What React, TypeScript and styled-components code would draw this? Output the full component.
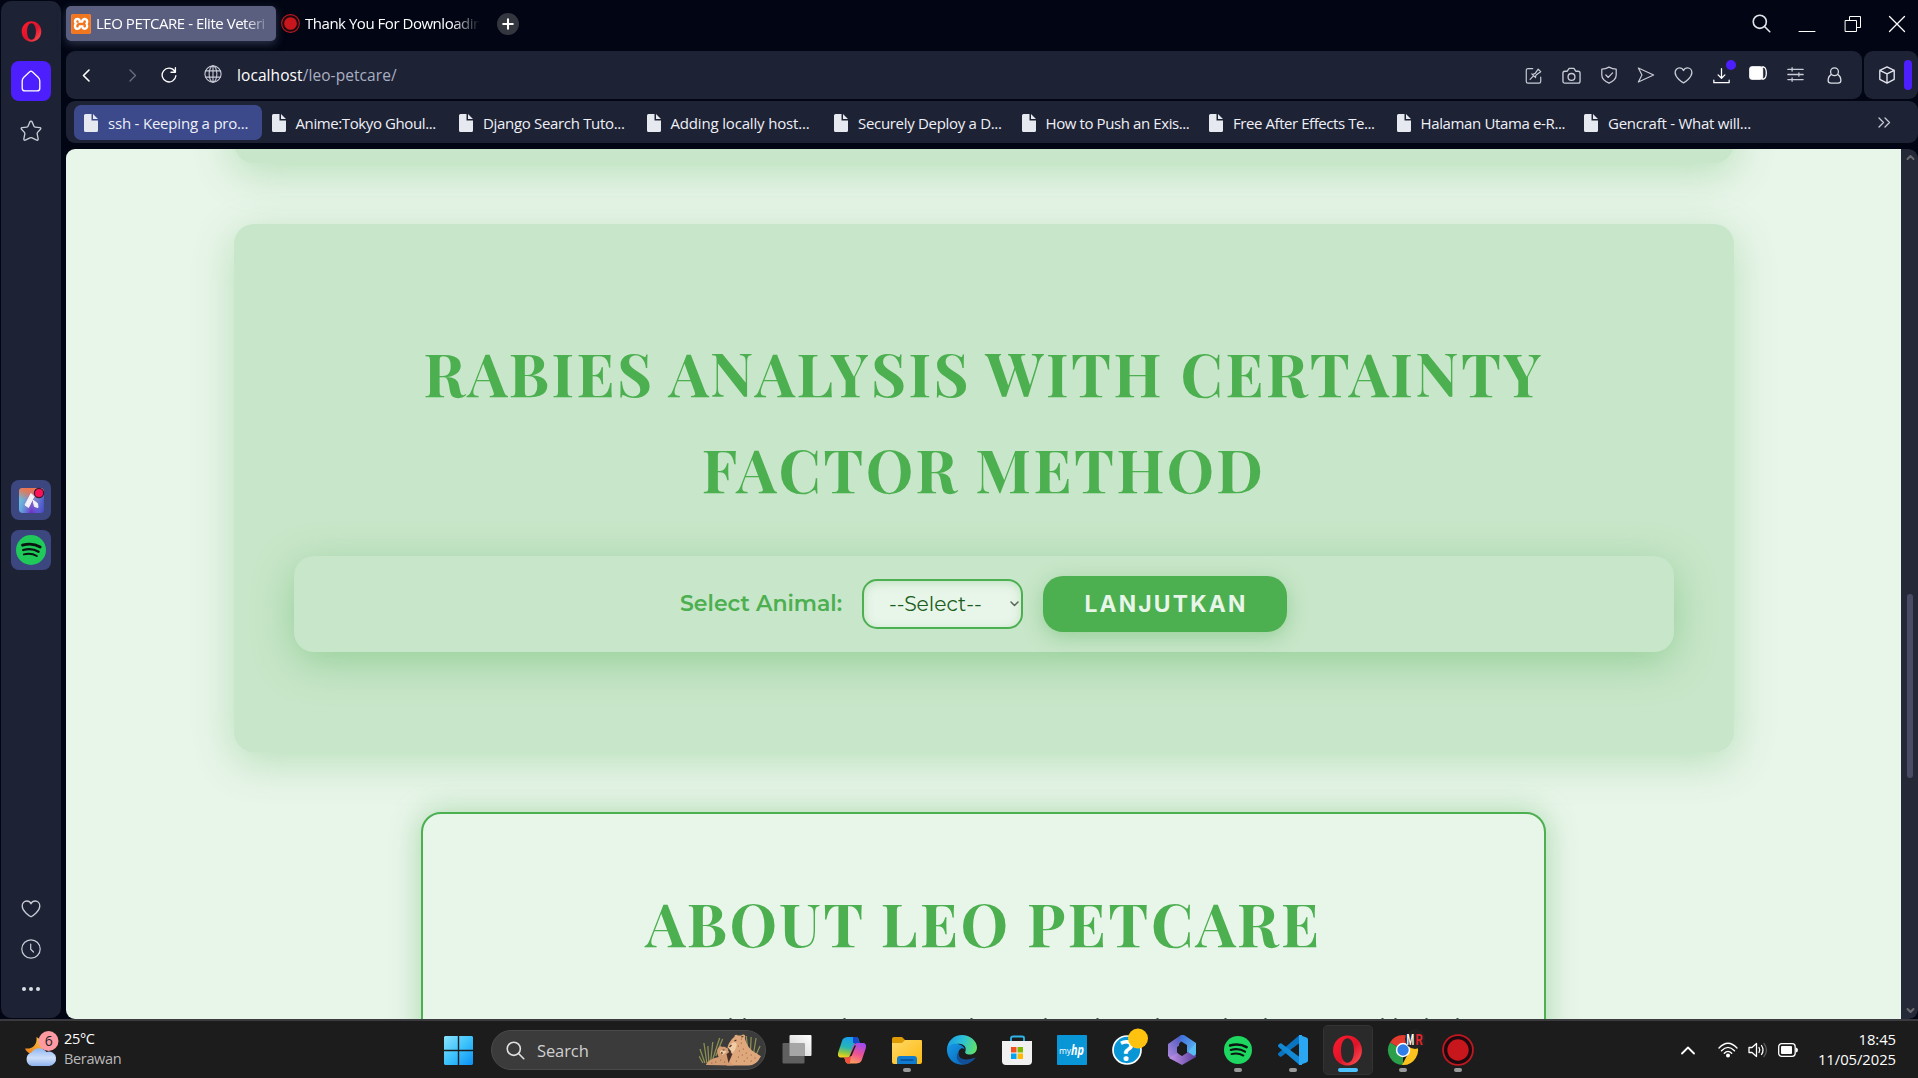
import React from 'react';
import styled, { createGlobalStyle } from 'styled-components';
import { SiXampp } from 'react-icons/si';

const UI = '"Open Sans", "Noto Sans", sans-serif';

const Global = createGlobalStyle`
  * { box-sizing: border-box; }
  body { margin: 0; background: #020614; overflow: hidden; }
  svg { display: block; flex: none; }
`;

const Desktop = styled.div`
  width: 1918px;
  height: 1078px;
  display: flex;
  flex-direction: column;
  overflow: hidden;
  background: #020614;
  font-family: ${UI};
`;
const BrowserWindow = styled.div`
  display: flex;
  height: 1019px;
  gap: 5px;
  padding-left: 1px;
`;

/* ---------- sidebar ---------- */
const Sidebar = styled.aside`
  width: 60px;
  height: 1017px;
  margin-top: 1px;
  border-radius: 10px;
  background: #1e2235;
  display: flex;
  flex-direction: column;
  align-items: center;
`;
const SideSlot = styled.div<{ $h: number; $mt?: number }>`
  height: ${(p) => p.$h}px;
  margin-top: ${(p) => p.$mt ?? 0}px;
  display: flex;
  align-items: center;
  justify-content: center;
`;
const SideTile = styled.div<{ $bg: string; $mt?: number }>`
  width: 40px;
  height: 40px;
  flex: none;
  margin-top: ${(p) => p.$mt ?? 0}px;
  border-radius: 8px;
  background: ${(p) => p.$bg};
  display: flex;
  align-items: center;
  justify-content: center;
`;

/* ---------- chrome ---------- */
const Column = styled.div`
  flex: 1;
  min-width: 0;
  display: flex;
  flex-direction: column;
`;
const TabStrip = styled.div`
  height: 51px;
  display: flex;
  padding-top: 6px;
  position: relative;
`;
const Tab = styled.div<{ $active?: boolean; $w: number }>`
  width: ${(p) => p.$w}px;
  height: 35px;
  border-radius: 5px;
  background: ${(p) => (p.$active ? '#5a5f80' : 'transparent')};
  box-shadow: ${(p) => (p.$active ? '0 3px 8px rgba(90, 95, 128, .5)' : 'none')};
  display: flex;
  align-items: center;
  gap: 5px;
  padding-left: 5px;
`;
const TabLabel = styled.span<{ $w: number; $ls?: number }>`
  width: ${(p) => p.$w}px;
  white-space: nowrap;
  color: #fff;
  font-size: 15px;
  line-height: 22px;
  padding-bottom: 2px;
  letter-spacing: ${(p) => p.$ls ?? 0}px;
  mask-image: linear-gradient(90deg, #000 calc(100% - 28px), transparent);
`;
const XamppBadge = styled.div`
  width: 20px;
  height: 20px;
  border-radius: 3px;
  background: #fff;
  color: #f0761f;
  font-size: 20px;
`;
const NewTab = styled.div`
  width: 22px;
  height: 22px;
  margin: 7px 0 0 19px;
  border-radius: 50%;
  background: #34363f;
  display: flex;
  align-items: center;
  justify-content: center;
`;
const WindowButtons = styled.div`
  margin-left: auto;
  height: 35px;
  display: flex;
  align-items: center;
`;
const Cell = styled.div<{ $w: number; $shift?: number; $ml?: number }>`
  width: ${(p) => p.$w}px;
  margin-left: ${(p) => p.$ml ?? 0}px;
  flex: none;
  display: flex;
  justify-content: center;
  position: relative;
  padding-bottom: ${(p) => p.$shift ?? 0}px;
`;
const DownloadDot = styled.i`
  position: absolute;
  top: -7px;
  left: 23px;
  width: 10px;
  height: 10px;
  border-radius: 50%;
  background: #4d1fff;
`;
const BarRow = styled.div`
  display: flex;
  gap: 2px;
  height: 48px;
`;
const AddressBar = styled.div`
  width: 1796px;
  border-radius: 9px;
  background: #1e2235;
  display: flex;
  align-items: center;
  padding-right: 9px;
`;
const Url = styled.div`
  flex: 1;
  margin-left: 14px;
  color: #a9afc2;
  font-size: 15.5px;
  letter-spacing: .08px;
  b { font-weight: 400; color: #fff; }
`;
const SidePanelBar = styled.div`
  flex: 1;
  border-radius: 9px;
  background: #1e2235;
  display: flex;
  align-items: center;
  padding-left: 14px;
  gap: 8px;
`;
const Accent = styled.div`
  width: 8px;
  height: 30px;
  border-radius: 4px;
  background: #4d1fff;
`;
const Bookmarks = styled.div`
  height: 42px;
  margin-top: 2px;
  border-radius: 9px;
  background: #1e2235;
  display: flex;
  align-items: center;
  padding-left: 8px;
  padding-top: 1px;
`;
const Bookmark = styled.div<{ $active?: boolean }>`
  width: 187.5px;
  height: 35px;
  border-radius: 7px;
  background: ${(p) => (p.$active ? '#3c4a8c' : 'transparent')};
  display: flex;
  align-items: center;
  gap: 10px;
  padding-left: 10px;
`;
const BookmarkText = styled.span<{ $ls: number }>`
  color: #eef0f6;
  font-size: 15px;
  white-space: nowrap;
  letter-spacing: ${(p) => p.$ls}px;
`;
const More = styled.div`
  margin-left: auto;
  padding-right: 27px;
`;

/* ---------- page ---------- */
const Viewport = styled.div`
  margin-top: 6px;
  height: 870px;
  display: flex;
  border-radius: 9px;
  overflow: hidden;
`;
const Page = styled.main`
  width: 1835px;
  height: 870px;
  overflow: hidden;
  background: #e8f5e9;
  display: flex;
  flex-direction: column;
  align-items: center;
`;
const Section = styled.section<{ $h: number; $mt?: number }>`
  width: 1500px;
  height: ${(p) => p.$h}px;
  flex: none;
  margin-top: ${(p) => p.$mt ?? 0}px;
  padding: 100px 60px 0;
  border-radius: 20px;
  background: #c8e6c9;
  box-shadow: 0 10px 40px rgba(76, 175, 80, .3);
`;
const Heading = styled.h2`
  margin: 0;
  color: #4caf50;
  text-align: center;
  font-family: "Playfair Display", "Liberation Serif", serif;
  font-weight: 700;
  font-size: 60px;
  line-height: 96px;
  letter-spacing: 2.5px;
`;
const Line = styled.span`
  display: block;
  white-space: nowrap;
`;
const AnimalForm = styled.div`
  height: 96px;
  margin-top: 40px;
  border-radius: 20px;
  background: #c8e6c9;
  box-shadow: 0 10px 40px rgba(76, 175, 80, .4);
  display: flex;
  align-items: center;
  justify-content: center;
  gap: 20px;
  font-family: Montserrat, Inter, sans-serif;
`;
const Label = styled.label`
  width: 162px;
  padding-bottom: 2px;
  white-space: nowrap;
  color: #4caf50;
  font-weight: 600;
  font-size: 22px;
`;
const Select = styled.div`
  width: 161px;
  height: 50px;
  border: 2px solid #4caf50;
  border-radius: 15px;
  background: #e8f5e9;
  box-shadow: inset 0 2px 10px rgba(76, 175, 80, .25);
  display: flex;
  align-items: center;
  justify-content: space-between;
  padding: 0 2px 1px 25px;
  color: #1b5e20;
  font-size: 20.3px;
  font-weight: 400;
  span { white-space: nowrap; }
`;
const Submit = styled.button`
  width: 244px;
  height: 56px;
  border: 0;
  border-radius: 20px;
  background: #4caf50;
  box-shadow: 0 5px 20px rgba(76, 175, 80, .4);
  color: #e8f5e9;
  font-family: Inter, sans-serif;
  font-weight: 700;
  font-size: 22.8px;
  letter-spacing: 2.2px;
  padding: 0 0 1px 2px;
`;
const About = styled.section`
  width: 1125px;
  height: 300px;
  flex: none;
  margin-top: 60px;
  padding-top: 60px;
  border: 2px solid #4caf50;
  border-radius: 20px;
  background: #e8f5e9;
  box-shadow: 0 0 30px rgba(76, 175, 80, .4);
`;
const ParagraphTop = styled.svg`
  margin: 48px 0 0 0;
`;
const ScrollTrack = styled.div`
  width: 17px;
  height: 870px;
  background: #252937;
  border-radius: 0 9px 9px 0;
  display: flex;
  flex-direction: column;
  align-items: center;
  padding: 5px 0 5px 1px;
`;
const Thumb = styled.div`
  width: 6px;
  height: 184px;
  margin: 433px 0 auto;
  border-radius: 3px;
  background: #4a4c66;
`;

/* ---------- taskbar ---------- */
const Taskbar = styled.footer`
  height: 59px;
  background: #1c1c1c;
  border-top: 2px solid #3b3b3f;
  padding-top: 1px;
  display: flex;
  align-items: center;
`;
const Weather = styled.div`
  width: 444px;
  padding-left: 24px;
  display: flex;
  align-items: center;
  gap: 4px;
  font-size: 14.5px;
  line-height: 20px;
  letter-spacing: -.35px;
  color: #fff;
  div { padding-bottom: 2px; }
  em { display: block; font-style: normal; color: #b9b9b9; }
`;
const SearchBox = styled.div`
  width: 275px;
  height: 40px;
  margin: 0 3px 0 18px;
  border: 1px solid #4a4a4a;
  border-radius: 20px;
  background: #3b3b3b;
  display: flex;
  align-items: center;
  padding: 0 4px 0 14px;
  gap: 12px;
  color: #d0d0d0;
  font-size: 16.5px;
  letter-spacing: -.1px;
  span { flex: 1; }
`;
const AppCell = styled.div<{ $focus?: boolean }>`
  width: 50px;
  height: 50px;
  margin: 0 2.57px;
  flex: none;
  border-radius: 5px;
  border: 1px solid ${(p) => (p.$focus ? '#333' : 'transparent')};
  background: ${(p) => (p.$focus ? '#2a2a2a' : 'transparent')};
  display: flex;
  flex-direction: column;
  align-items: center;
  padding-top: 8px;
  gap: 2px;
`;
const Running = styled.i<{ $focus?: boolean }>`
  width: ${(p) => (p.$focus ? 20 : 8)}px;
  height: 4px;
  border-radius: 2px;
  background: ${(p) => (p.$focus ? '#4cc2ff' : '#9a9a9a')};
`;
const Tray = styled.div`
  margin-left: auto;
  display: flex;
  align-items: center;
  padding-right: 22px;
`;
const Clock = styled.div`
  width: 88px;
  padding-bottom: 2px;
  text-align: right;
  color: #fff;
  font-size: 14.8px;
  line-height: 20px;
  letter-spacing: -.05px;
`;

/* ---------- icons ---------- */
type IconProps = { s?: number; w?: number; h?: number; vb?: string; c?: string; sw?: number; children: React.ReactNode };
const Stroke = ({ s = 20, w, h, vb = '0 0 20 20', c = '#c9ccd6', sw = 1.4, children }: IconProps) => (
  <svg width={w ?? s} height={h ?? s} viewBox={vb} fill="none" stroke={c} strokeWidth={sw} strokeLinecap="round" strokeLinejoin="round">
    {children}
  </svg>
);

const HEART = 'M10 17.8C8.2 16.8 1.2 12.2 1.2 6.9 1.2 4 3.3 2 5.7 2 7.7 2 9.3 3.100 10 4.800 10.700 3.100 12.300 2 14.300 2 16.700 2 18.800 4 18.800 6.900 18.800 12.200 11.800 16.800 10 17.800Z';

const OperaMark = ({ s, id }: { s: number; id: string }) => (
  <svg width={s} height={s} viewBox="0 0 30 30">
    <defs>
      <linearGradient id={id} x1="0" y1="0" x2="1" y2="1">
        <stop offset="0" stopColor="#ff1b2d" />
        <stop offset=".55" stopColor="#e0132a" />
        <stop offset="1" stopColor="#ff5a5a" />
      </linearGradient>
    </defs>
    <path fillRule="evenodd" fill={`url(#${id})`} d="M15 .5C7 .5 1 7 1 15s6 14.500 14 14.500S29 23 29 15 23 .5 15 .5Zm0 2.700c3.900 0 6.300 5 6.300 11.800S18.900 26.800 15 26.800 8.700 21.800 8.700 15 11.100 3.200 15 3.200Z" />
  </svg>
);

const SpotifyMark = ({ s, bg }: { s: number; bg: string }) => (
  <svg width={s} height={s} viewBox="0 0 30 30">
    <circle cx="15" cy="15" r="15" fill={bg} />
    <g fill="none" stroke="#0b1410" strokeLinecap="round">
      <path d="M6.500 10.200C12 8.600 19 9 24.200 12" strokeWidth="2.800" />
      <path d="M7.200 15C12.500 13.500 18 14 22.600 16.700" strokeWidth="2.300" />
      <path d="M7.900 19.400C12.300 18.200 17 18.700 20.800 21" strokeWidth="2" />
    </g>
  </svg>
);

const RecordMark = ({ s }: { s: number }) => (
  <svg width={s} height={s} viewBox="0 0 30 30">
    <circle cx="15" cy="15" r="14" fill="#1c0a10" stroke="#c0181f" strokeWidth="1.700" />
    <circle cx="15" cy="15" r="10" fill="#c8161d" />
  </svg>
);

const Doc = () => (
  <svg width="14" height="18" viewBox="0 0 14 18" fill="#e6eaf0">
    <path d="M1.500 0H7.500V6.500H14V16.500A1.500 1.500 0 0 1 12.500 18H1.500A1.500 1.500 0 0 1 0 16.500V1.500A1.500 1.500 0 0 1 1.500 0ZM9 0L14 5H9Z" />
  </svg>
);

const AriaApp = () => (
  <svg width="25" height="25" viewBox="0 0 25 25" style={{ overflow: 'visible' }}>
    <defs>
      <linearGradient id="ar1" x1=".3" y1="0" x2=".6" y2="1">
        <stop offset="0" stopColor="#ee7350" /><stop offset=".45" stopColor="#8a7cc0" /><stop offset="1" stopColor="#6a28cc" />
      </linearGradient>
      <linearGradient id="ar2"><stop offset="0" stopColor="#57d0e8" stopOpacity=".8" /><stop offset=".5" stopColor="#57d0e8" stopOpacity="0" /><stop offset="1" stopColor="#3b58c8" stopOpacity=".8" /></linearGradient>
      <linearGradient id="ar3" x1="0" y1="0" x2="0" y2="1"><stop offset="0" stopColor="#ee7350" /><stop offset="1" stopColor="#ee7350" stopOpacity="0" /></linearGradient>
    </defs>
    <rect width="25" height="25" rx="4" fill="url(#ar1)" />
    <rect width="25" height="25" rx="4" fill="url(#ar2)" />
    <rect width="25" height="11" rx="4" fill="url(#ar3)" />
    <path d="M12 5.500 15 8.500 9.500 19.500 6 17ZM14 12 18.500 15.500 19 19.500 15.500 18.500Z" fill="#f4f0fa" stroke="#f4f0fa" strokeLinejoin="round" />
    <circle cx="20" cy="5" r="4.600" fill="#ff1057" stroke="#3a1830" strokeWidth="1.200" />
  </svg>
);

const WeatherIcon = () => (
  <svg width="36" height="38" viewBox="0 0 36 38">
    <defs>
      <linearGradient id="wm" x1="1" y1="0" x2="0" y2="1"><stop offset="0" stopColor="#f6c944" /><stop offset="1" stopColor="#f07a1c" /></linearGradient>
      <linearGradient id="wc" x1="0" y1="0" x2="0" y2="1"><stop offset="0" stopColor="#8fb6f2" /><stop offset=".55" stopColor="#cfe0fa" /><stop offset="1" stopColor="#8db2ee" /></linearGradient>
    </defs>
    <path d="M12.500 6C13.500 13 9 18.500 1 17.500 4 24 13 26 18 21L20 11Z" fill="url(#wm)" />
    <path d="M8 35A7 7 0 0 1 7.500 21.500 9 9 0 0 1 22.500 21 7.200 7.200 0 1 1 25 35Z" fill="url(#wc)" />
    <circle cx="24.500" cy="10" r="10" fill="#ff9aa2" />
    <text x="24.500" y="15" fontSize="14" textAnchor="middle" fill="#222" fontFamily="Open Sans">6</text>
  </svg>
);

const StartIcon = () => (
  <svg width="29" height="29" viewBox="0 0 29 29">
    <defs><linearGradient id="win" x1="0" y1="0" x2="1" y2="1"><stop offset="0" stopColor="#8be3ff" /><stop offset=".5" stopColor="#3dc3fb" /><stop offset="1" stopColor="#0a90f5" /></linearGradient></defs>
    <path fill="url(#win)" d="M1 0H13.800V13.800H0V1ZM15.200 0H28L29 1V13.800H15.200ZM0 15.200H13.800V29H1L0 28ZM15.200 15.200H29V28L28 29H15.200Z" />
  </svg>
);

const Cheetahs = () => (
  <svg width="62" height="32" viewBox="0 0 63 32" preserveAspectRatio="none">
    <g stroke="#8b9052" strokeWidth="1.300" fill="none">
      <path d="M6 29 1 15M8 29 5 9M10 28 9 12M12 26 14 8M14 25 21 4M17 22 24 5M4 29 0 22M50 20 48 2M52 22 53 3M55 22 58 4M57 23 62 12" />
    </g>
    <path d="M29 30C30 21 34 17 35 12 32 12 31 15 29 14 29 10 34 4 36 3 36 .5 38 0 39.500 1.500H43C45-.5 48 1 46.500 4 48 9 50 14 56 18 60 20 62 22 63 22 60 28 57 31 50 31.500H28Z" fill="#dfa77c" />
    <path d="M7 31C9 26 15 24 20 23 18 19 18 15 20 13.500 21 12 23 12 23.500 13 25 12.500 27 13 28 14 30 14 30 16 29.500 16.500 31 18 31 19 29 20 29 25 32 29 35 31.500Z" fill="#d49c72" />
    <path d="M30 14C32 9 35 7 38 9 39 13 36 17 34 19ZM21 18C23 15 26 15 28 18L24 21Z" fill="#f0cba4" />
    <path d="M28 20 31 18 34 20 30 29Z" fill="#493027" />
    <path d="M31 13 33 11M36 7 38 6M24 16H26M43 3 45 2.500M23 18 23.500 20" stroke="#4a2e20" strokeWidth="1.200" />
    <g fill="#875032">
      {[[40, 12], [43, 9], [41, 17], [45, 15], [48, 19], [44, 21], [40, 23], [49, 24], [53, 21], [46, 27], [53, 27], [57, 24], [38, 27], [17, 28], [22, 26], [13, 29], [26, 28], [43, 5]].map(([x, y]) => (
        <circle key={`${x}-${y}`} cx={x} cy={y} r=".6" />
      ))}
    </g>
  </svg>
);

const Glass = ({ s, c = '#e2e4ea' }: { s: number; c?: string }) => (
  <Stroke s={s} c={c} sw={1.7}><circle cx="8.200" cy="8.200" r="6.900" /><path d="M13.200 13.200 18.700 18.700" /></Stroke>
);

const PadBox = styled.div`
  width: 32px;
  height: 32px;
  display: flex;
  align-items: center;
  justify-content: center;
`;
function Pad({ children }: { children: React.ReactNode }) {
  return <PadBox>{children}</PadBox>;
}

const APPS: { icon: React.ReactNode; running?: boolean; focus?: boolean }[] = [
  {
    icon: (
      <svg width="32" height="32" viewBox="0 0 32 32">
        <defs><linearGradient id="tv" x1="0" y1="1" x2="1" y2="0"><stop offset="0" stopColor="#cfcfcf" /><stop offset="1" stopColor="#fff" /></linearGradient></defs>
        <rect x="8.500" y="1" width="22" height="21" rx="1" fill="url(#tv)" />
        <rect x="1.500" y="9" width="22" height="20.500" rx="1" fill="#606060" />
        <path d="M8.500 9H23.500V22H8.500Z" fill="#a6a6a6" />
      </svg>
    ),
  },
  {
    icon: (
      <svg width="32" height="32" viewBox="0 0 32 32">
        <defs>
          <linearGradient id="cp1" x1=".5" y1="0" x2=".3" y2="1"><stop offset="0" stopColor="#189df0" /><stop offset=".5" stopColor="#27b5b5" /><stop offset=".8" stopColor="#9ac83a" /><stop offset="1" stopColor="#f6d220" /></linearGradient>
          <linearGradient id="cp2" x1=".7" y1="0" x2=".3" y2="1"><stop offset="0" stopColor="#a04af0" /><stop offset=".5" stopColor="#ef5390" /><stop offset="1" stopColor="#ffa55a" /></linearGradient>
        </defs>
        <path d="M13 3H20C23 3 22.500 7 24 9H19L15 20C14 23 12 23.500 9 23.500H5C2 23.500 1.500 21 2.300 18L6 7C7 4 9 3 13 3Z" fill="url(#cp1)" />
        <path d="M17 3H20C23 3 22 8 24.500 9H17Z" fill="#1747cf" />
        <path d="M19 29.500H12C9 29.500 9.500 25 8 23.500H13L17 12C18 9.500 20 9 23 9H27C30 9 30.500 11.500 29.700 14.500L26 25.500C25 28.500 23 29.500 19 29.500Z" fill="url(#cp2)" />
        <path d="M8 23.500H13L15 21 14 29.500H12C9 29.500 9.500 25 8 23.500Z" fill="#f0503c" />
        <path d="M18.500 11.500H20L15.500 22 13.500 22.500Z" fill="#1c1c1c" />
      </svg>
    ),
  },
  {
    running: true,
    icon: (
      <svg width="32" height="32" viewBox="0 0 32 32">
        <defs><linearGradient id="fx" x1="0" y1="0" x2="1" y2="1"><stop offset="0" stopColor="#ffd968" /><stop offset="1" stopColor="#fdb90f" /></linearGradient></defs>
        <path d="M1 5Q1 3 3 3H11L14 6V12H1Z" fill="#dd9a05" />
        <path d="M1 9H11L14 6H30Q31 6 31 7V28Q31 30 29 30H3Q1 30 1 28Z" fill="url(#fx)" />
        <path d="M6 30V25Q6 22 9 22H23Q26 22 26 25V30Z" fill="#0f7cd0" />
        <path d="M9.500 26H22.500" stroke="#0a4f94" strokeWidth="1.500" />
      </svg>
    ),
  },
  {
    icon: (
      <svg width="32" height="32" viewBox="0 0 32 32">
        <defs>
          <linearGradient id="ed1" x1="0" y1=".3" x2="1" y2=".5"><stop offset="0" stopColor="#1b9de2" /><stop offset=".5" stopColor="#2cc0d8" /><stop offset="1" stopColor="#5fe06a" /></linearGradient>
          <linearGradient id="ed2" x1="0" y1="0" x2="1" y2="1"><stop offset="0" stopColor="#159be8" /><stop offset="1" stopColor="#0a5fb4" /></linearGradient>
        </defs>
        <path d="M1 16C1 7 8 1 16 1S31 7 31 13.500C31 18 27.500 20.500 24 20.500 20 20.500 18.500 19 19.500 17 21 12 16 9 11 10 5 11 2 15 1 18Z" fill="url(#ed1)" />
        <path d="M1 15C3 10 8 9 12 10 16 11 19 14 18.500 15.500 16 12 11.500 16 12.500 21 14 27 20 29 23 29 12 34 .5 27 1 15Z" fill="url(#ed2)" />
        <path d="M12.500 18C11.500 24 17 28 29.500 23.500 27 28 21 31 17 30 11 29 9 22 12.500 18Z" fill="#124f95" />
      </svg>
    ),
  },
  {
    icon: (
      <svg width="32" height="32" viewBox="0 0 32 32">
        <path d="M10 8V4Q10 2.500 12 2.500H21Q23 2.500 23 4V8" fill="none" stroke="#2fb4ea" strokeWidth="1.800" />
        <path d="M1 7H31V27Q31 31 27 31H5Q1 31 1 27Z" fill="#f1f1f1" />
        <path d="M10 13H15.500V18.500H10Z" fill="#f25022" /><path d="M16.500 13H22V18.500H16.500Z" fill="#7fba00" />
        <path d="M10 19.500H15.500V25H10Z" fill="#00a4ef" /><path d="M16.500 19.500H22V25H16.500Z" fill="#ffb900" />
      </svg>
    ),
  },
  {
    icon: (
      <svg width="32" height="32" viewBox="0 0 32 32">
        <rect x="1" y="1" width="30" height="30" rx="1" fill="#0896d7" />
        <text x="3" y="20" fontSize="8.500" fill="#fff" fontFamily="Open Sans">my</text>
        <text x="15" y="21" fontSize="15" fill="#fff" fontWeight="700" fontStyle="italic" fontFamily="Open Sans" textLength="13" lengthAdjust="spacingAndGlyphs">hp</text>
      </svg>
    ),
  },
  {
    icon: (
      <svg width="32" height="32" viewBox="0 0 32 32" style={{ overflow: 'visible' }}>
        <circle cx="16" cy="16" r="14" fill="#0896d7" stroke="#fff" strokeWidth="1.700" />
        <text x="16" y="26.500" fontSize="29" fill="#fff" fontWeight="700" textAnchor="middle" fontFamily="Open Sans">?</text>
        <circle cx="27" cy="4.500" r="10" fill="#ffc20e" />
      </svg>
    ),
  },
  {
    icon: (
      <svg width="32" height="32" viewBox="0 0 32 32">
        <defs>
          <linearGradient id="mo1" x1="1" y1="0" x2="0" y2="1"><stop offset="0" stopColor="#3650b8" /><stop offset="1" stopColor="#b58be0" /></linearGradient>
          <linearGradient id="mo2" x1="0" y1="0" x2="1" y2="1"><stop offset="0" stopColor="#3c66d8" /><stop offset="1" stopColor="#64c6f6" /></linearGradient>
          <linearGradient id="mo3" x1="0" y1="0" x2="1" y2="0"><stop offset="0" stopColor="#c294ea" /><stop offset="1" stopColor="#5a3f9c" /></linearGradient>
        </defs>
        <path d="M15 1 19 3 13 10V19L5 25 2 22V10Z" fill="url(#mo1)" />
        <path d="M15 1H18L30 9V20L27 23 21 18V11L13 6Z" fill="url(#mo2)" />
        <path d="M3 24 11 19 16 22 22 18 30 13V23L16 31Z" fill="url(#mo3)" />
        <path d="M30 9V20L28 22 22 18Z" fill="#59bdf5" />
        <path d="M16 10 21 13V18.500L16 21.500 11 18.500V13Z" fill="#1c1c1c" />
      </svg>
    ),
  },
  { running: true, icon: <Pad><SpotifyMark s={28} bg="#1ed760" /></Pad> },
  {
    running: true,
    icon: (
      <svg width="32" height="32" viewBox="0 0 32 32">
        <path d="M22.500 1V9L4.500 22.500Q3.500 23.200 2.500 22.300L1.200 21Q.5 20 1.500 19Z" fill="#0a74c0" />
        <path d="M22.500 31V23L4.500 9.500Q3.500 8.800 2.500 9.700L1.200 11Q.5 12 1.500 13Z" fill="#1389d6" />
        <path d="M22.500 1 29.500 3.500Q31 4 31 5.500V26.500Q31 28 29.500 28.500L22.500 31Q23.500 31 23.500 29V3Q23.500 1 22.500 1Z" fill="#2aa6f2" />
        <path d="M22 1H25V31H22Z" fill="#2aa6f2" />
      </svg>
    ),
  },
  { running: true, focus: true, icon: <Pad><OperaMark s={31} id="op2" /></Pad> },
  {
    running: true,
    icon: (
      <svg width="32" height="32" viewBox="0 0 32 32" style={{ overflow: 'visible' }}>
        <path d="M16 16 3 8.500A15 15 0 0 1 29 8.500Z" fill="#e33b2e" />
        <path d="M16 16 16 31A15 15 0 0 1 3 8.500Z" fill="#2c9f4b" />
        <path d="M16 16 29 8.500A15 15 0 0 1 15 31L22 18Z" fill="#fcc31e" />
        <circle cx="16" cy="16" r="7.200" fill="#fff" />
        <circle cx="16" cy="16" r="5.700" fill="#2f7de8" />
        <circle cx="28" cy="5" r="10" fill="#222" />
        <text transform="translate(19.500 10.500) scale(.58 1)" fontSize="15" fontWeight="700" fontFamily="Roboto" fill="#fff">M</text>
        <text transform="translate(28.500 10.500) scale(.75 1)" fontSize="15" fontWeight="700" fontFamily="Roboto" fill="#e8232b">R</text>
      </svg>
    ),
  },
  { running: true, icon: <Pad><RecordMark s={32} /></Pad> },
];

const BOOKMARKS: [string, number][] = [
  ['ssh - Keeping a pro...', -0.2],
  ['Anime:Tokyo Ghoul...', -0.4],
  ['Django Search Tuto...', -0.32],
  ['Adding locally host...', -0.17],
  ['Securely Deploy a D...', -0.31],
  ['How to Push an Exis...', -0.4],
  ['Free After Effects Te...', -0.43],
  ['Halaman Utama e-R...', -0.36],
  ['Gencraft - What will...', -0.25],
];

const ASCENDERS = [730, 744, 844, 971, 1045, 1097, 1157, 1225, 1265, 1382, 1395, 1426, 1457];

export default function App() {
  return (
    <Desktop>
      <Global />
      <BrowserWindow>
        <Sidebar>
          <SideSlot $h={20} $mt={20}><OperaMark s={21} id="op1" /></SideSlot>
          <SideTile $bg="#4d1fff" $mt={20}>
            <Stroke s={22} c="#fff" sw={1.2}><path d="M10 1Q10.600 1 11.200 1.600L16.500 6.600Q18 8 18 10V16.500Q18 19 15.500 19H4.500Q2 19 2 16.500V10Q2 8 3.500 6.600L8.800 1.600Q9.400 1 10 1Z" /></Stroke>
          </SideTile>
          <SideSlot $h={24} $mt={18}>
            <Stroke s={22} sw={1.2}><path d="M10 1Q10.700 1 11 1.700L12.700 5.600Q13 6.300 13.700 6.400L18.100 7Q19.500 7.300 18.600 8.400L16 11.300Q15.500 12 15.600 12.700L16.500 17.200Q16.600 18.700 15.200 18.300L11 16.300Q10 15.900 9 16.300L4.800 18.300Q3.400 18.700 3.500 17.200L4.400 12.700Q4.500 12 4 11.300L1.400 8.400Q.5 7.300 1.900 7L6.300 6.400Q7 6.300 7.300 5.600L9 1.700Q9.300 1 10 1Z" /></Stroke>
          </SideSlot>
          <SideTile $bg="#3c4780" $mt={337}><AriaApp /></SideTile>
          <SideTile $bg="#3c4780" $mt={10}><SpotifyMark s={30} bg="#1fc95a" /></SideTile>
          <SideSlot $h={20} $mt={329}><Stroke sw={1.300}><path d={HEART} /></Stroke></SideSlot>
          <SideSlot $h={20} $mt={20}><Stroke sw={1.200}><circle cx="10" cy="10" r="9.200" /><path d="M9.700 5V10.300L12.500 13" /></Stroke></SideSlot>
          <SideSlot $h={20} $mt={20}>
            <svg width="18" height="5" viewBox="0 0 18 5" fill="#dcdee6"><circle cx="2" cy="2" r="2" /><circle cx="9" cy="2" r="2" /><circle cx="16" cy="2" r="2" /></svg>
          </SideSlot>
        </Sidebar>

        <Column>
          <TabStrip>
            <Tab $active $w={210}><XamppBadge><SiXampp /></XamppBadge><TabLabel $w={176} $ls={-0.47}>LEO PETCARE - Elite Veteri</TabLabel></Tab>
            <Tab $w={202}><RecordMark s={19} /><TabLabel $w={175} $ls={-0.47}>Thank You For Downloadin</TabLabel></Tab>
            <NewTab><Stroke s={12} c="#fff" sw={3.400}><path d="M10 2V18M2 10H18" /></Stroke></NewTab>
            <WindowButtons>
              <Cell $w={45}><Glass s={19} /></Cell>
              <Cell $w={46}><Stroke w={18} h={18} vb="0 0 18 18" c="#fff" sw={1}><path d="M1 16.500H17" /></Stroke></Cell>
              <Cell $w={45}><Stroke s={18} vb="0 0 18 18" c="#fff" sw={1}><path d="M1.500 5.500H12.500V16.500H1.500ZM5.500 5.500V1.500H16.500V12.500H12.500" /></Stroke></Cell>
              <Cell $w={43}><Stroke s={18} vb="0 0 18 18" c="#fff" sw={1.300}><path d="M1.500 1.500 16.500 16.500M16.500 1.500 1.500 16.500" /></Stroke></Cell>
            </WindowButtons>
          </TabStrip>

          <BarRow>
            <AddressBar>
              <Cell $w={40}><Stroke w={8} h={13} vb="0 0 8 13" c="#fff" sw={1.600}><path d="M7 1 1.500 6.500 7 12" /></Stroke></Cell>
              <Cell $w={53}><Stroke w={8} h={13} vb="0 0 8 13" c="#6a6e7f" sw={1.400}><path d="M1 1 6.500 6.500 1 12" /></Stroke></Cell>
              <Cell $w={20}><Stroke s={16} c="#fff" sw={1.700}><path d="M17 5A8.600 8.600 0 1 0 18.600 11M18 1V6.500H12.500" /></Stroke></Cell>
              <Cell $w={20} $ml={24} $shift={2}><Stroke s={18} sw={1.200}><circle cx="10" cy="10" r="9" /><ellipse cx="10" cy="10" rx="4.300" ry="9" /><path d="M10 1V19M1.800 6.500H18.200M1.800 13.500H18.200" /></Stroke></Cell>
              <Url>
                <b>localhost</b>/leo-petcare/
              </Url>
              <Cell $w={37.6}><Stroke s={17}><path d="M9 2H3.500Q1.500 2 1.500 4V17Q1.500 19 3.500 19H16.500Q18.500 19 18.500 17V12M6 14.500 10 10.500M8 8 12.500 12.500M9 8.800 12 7.500 15.500 2.500 18.500 5.500 13.300 9 12 12" /></Stroke></Cell>
              <Cell $w={37.6}><Stroke s={19}><path d="M3 5.500H5.500L7.500 2.500H12.500L14.500 5.500H17Q19 5.500 19 7.500V16Q19 18 17 18H3Q1 18 1 16V7.500Q1 5.500 3 5.500Z" /><circle cx="10" cy="11.500" r="3.600" /></Stroke></Cell>
              <Cell $w={37.6}><Stroke s={18}><path d="M10 1.200Q14 3.500 18 3.500V10Q18 15.500 10 19 2 15.500 2 10V3.500Q6 3.500 10 1.200ZM6.500 10 9.200 12.700 14 7.700" /></Stroke></Cell>
              <Cell $w={37.6}><Stroke s={18} sw={1.300}><path d="M1.500 2.200 18.500 10 1.500 17.800 5.500 10Z" /></Stroke></Cell>
              <Cell $w={37.6}><Stroke s={19} sw={1.400}><path d={HEART} /></Stroke></Cell>
              <Cell $w={37.6}>
                <Stroke s={17} c="#fff" sw={1.500}><path d="M10 2V13M6 9.300 10 13.300 14 9.300M1 15.500V18.500H19V15.500" /></Stroke>
                <DownloadDot />
              </Cell>
              <Cell $w={35.6} $shift={4}>
                <svg width="18" height="14" viewBox="0 0 18 14"><rect x=".7" y=".7" width="13" height="12.600" rx="2" fill="#fff" stroke="#fff" /><path d="M15 1Q17.300 2.500 17.300 7T15 13" fill="none" stroke="#fff" strokeWidth="1.300" /><path d="M13 1H15M13 13H15" stroke="#fff" strokeWidth="1.300" /></svg>
              </Cell>
              <Cell $w={39.6} $shift={2}><Stroke s={17} sw={1.500}><path d="M1 4H19M1 10H19M1 16H19M6 2V6M14 8V12M6 14V18" /></Stroke></Cell>
              <Cell $w={37.6}><Stroke s={17} c="#dcdee6" sw={1.500}><circle cx="10" cy="5.500" r="4.600" /><path d="M6 9C3.500 10.500 2.500 13 2.500 16Q2.500 19 6 19H14Q17.500 19 17.500 16C17.500 13 16.500 10.500 14 9" /></Stroke></Cell>
            </AddressBar>
            <SidePanelBar>
              <Stroke s={18} c="#e4e6ee" sw={1.500}><path d="M10 1 18 4.800V14.800L10 19 2 14.800V4.800ZM2 4.800 10 8.800 18 4.800M10 8.800V19" /></Stroke>
              <Accent />
            </SidePanelBar>
          </BarRow>

          <Bookmarks>
            {BOOKMARKS.map(([t, ls], i) => (
              <Bookmark key={t} $active={i === 0}><Doc /><BookmarkText $ls={ls}>{t}</BookmarkText></Bookmark>
            ))}
            <More><Stroke w={13} h={11} vb="0 0 13 11" sw={1.300}><path d="M1 1 5.500 5.500 1 10M7 1 11.500 5.500 7 10" /></Stroke></More>
          </Bookmarks>

          <Viewport>
            <Page>
              <Section $h={200} $mt={-186} />
              <Section $h={528} $mt={61}>
                <Heading>
                  <Line>RABIES ANALYSIS WITH CERTAINTY</Line>
                  <Line>FACTOR METHOD</Line>
                </Heading>
                <AnimalForm>
                  <Label>Select Animal:</Label>
                  <Select>
                    <span>--Select--</span>
                    <Stroke w={9} h={6} vb="0 0 9 6" c="#5a665a" sw={1.500}><path d="M1 1 4.500 4.500 8 1" /></Stroke>
                  </Select>
                  <Submit>LANJUTKAN</Submit>
                </AnimalForm>
              </Section>
              <About>
                <Heading><Line>ABOUT LEO PETCARE</Line></Heading>
                <ParagraphTop width="1121" height="4" viewBox="423 0 1121 4">
                  {ASCENDERS.map((x) => <path key={x} d={`M${x - 0.5} 0h2v4h-2z`} fill="#2f5a4a" />)}
                </ParagraphTop>
              </About>
            </Page>
            <ScrollTrack>
              <Stroke w={9} h={7} vb="0 0 9 7" c="#6b6b70" sw={2}><path d="M1.500 5 4.500 2 7.500 5" /></Stroke>
              <Thumb />
              <Stroke w={9} h={7} vb="0 0 9 7" c="#6b6b70" sw={2}><path d="M1.500 2 4.500 5 7.500 2" /></Stroke>
            </ScrollTrack>
          </Viewport>
        </Column>
      </BrowserWindow>

      <Taskbar>
        <Weather>
          <WeatherIcon />
          <div>25°C<em>Berawan</em></div>
        </Weather>
        <StartIcon />
        <SearchBox><Glass s={19} c="#e0e0e0" /><span>Search</span><Cheetahs /></SearchBox>
        {APPS.map((a, i) => (
          <AppCell key={i} $focus={a.focus}>
            {a.icon}
            {a.running && <Running $focus={a.focus} />}
          </AppCell>
        ))}
        <Tray>
          <Cell $w={40}><Stroke w={14} h={9} vb="0 0 14 9" c="#fff" sw={1.800}><path d="M1 7.500 7 1.500 13 7.500" /></Stroke></Cell>
          <Cell $w={40}>
            <Stroke w={20} h={16} vb="0 0 20 16" c="#fff" sw={1.400}><path d="M1 6Q10-3.500 19 6M3.500 8.700Q10 2 16.500 8.700M6.300 11.300Q10 7.500 13.700 11.300" /><circle cx="10" cy="13.500" r="1.300" fill="#fff" /></Stroke>
          </Cell>
          <Cell $w={20}>
            <Stroke w={20} h={16} vb="0 0 20 16" c="#fff" sw={1.300}><path d="M1 5.500H4L8.500 1.500V14.500L4 10.500H1ZM11 5.500Q12.500 8 11 10.500M13.500 3.500Q16.500 8 13.500 12.500" /><path d="M16 1.500Q21 8 16 14.500" stroke="#5a5a5a" /></Stroke>
          </Cell>
          <Cell $w={40}>
            <svg width="20" height="14" viewBox="0 0 20 14"><rect x=".7" y=".7" width="16.500" height="12.600" rx="3" fill="none" stroke="#fff" strokeWidth="1.300" /><rect x="3" y="3" width="11" height="8" rx="1" fill="#fff" /><path d="M18 4.500Q20 5 20 7T18 9.500Z" fill="#fff" /></svg>
          </Cell>
          <Clock>18:45<br />11/05/2025</Clock>
        </Tray>
      </Taskbar>
    </Desktop>
  );
}
